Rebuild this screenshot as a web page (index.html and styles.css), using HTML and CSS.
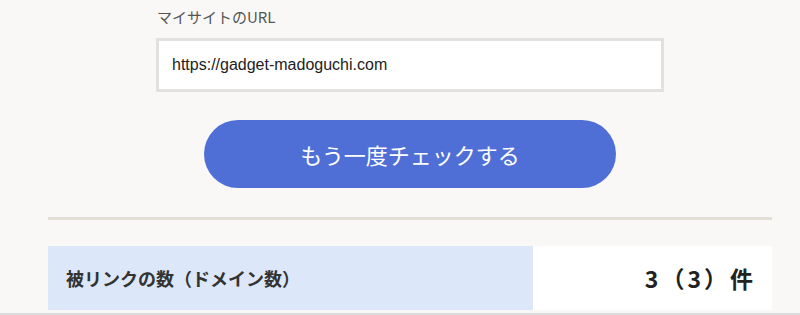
FILE: index.html
```html
<!DOCTYPE html>
<html lang="ja">
<head>
    <meta charset="UTF-8">
    <meta name="viewport" content="width=device-width, initial-scale=1.0">
    <title>被リンクチェック</title>
    <link rel="stylesheet" href="styles.css">
</head>
<body>
    <div class="container">
        <div class="check-form">
            <label class="form-label" for="site-url">マイサイトのURL</label>
            <div class="url-box" id="site-url">https://gadget-madoguchi.com</div>
            <button class="check-btn">もう一度チェックする</button>
        </div>
        <hr class="divider">
        <div class="result-row">
            <div class="result-label">被リンクの数（ドメイン数）</div>
            <div class="result-value">3（3）件</div>
        </div>
    </div>
</body>
</html>
```
FILE: styles.css
```css
html, body {
    margin: 0;
    height: 100%;
}
body {
    font-family: "Noto Sans CJK JP", "Liberation Sans", sans-serif;
    background: #f9f8f6;
    border-bottom: 2px solid #dcdcdc;
    box-sizing: border-box;
    overflow: hidden;
}
.container {
    width: 724px;
    margin-left: 48px;
}
.check-form {
    width: 508px;
    margin: 0 auto;
    padding-top: 6px;
}
.form-label {
    display: block;
    font-size: 15px;
    line-height: 22px;
    color: #555;
    padding-left: 1px;
}
.url-box {
    margin-top: 10px;
    height: 48px;
    border: 3px solid #e3e1de;
    background: #fff;
    box-sizing: content-box;
    display: flex;
    align-items: center;
    padding-left: 13px;
    font-family: "Liberation Sans", Arial, sans-serif;
    font-size: 16px;
    color: #222;
}
.check-btn {
    display: block;
    width: 412px;
    height: 68px;
    margin: 28px auto 0;
    border: none;
    border-radius: 34px;
    background: #4f6fd7;
    color: #fff;
    font-family: "Noto Sans CJK JP", sans-serif;
    font-size: 22px;
    cursor: pointer;
}
.divider {
    margin: 29px 0 0;
    border: none;
    height: 3px;
    background: #e2dfd6;
}
.result-row {
    margin-top: 26px;
    display: flex;
    height: 64px;
}
.result-label {
    width: 485px;
    background: #dce8fa;
    display: flex;
    align-items: center;
    padding-left: 18px;
    box-sizing: border-box;
    font-size: 18px;
    font-weight: bold;
    color: #333;
}
.result-value {
    flex: 1;
    background: #fff;
    display: flex;
    align-items: center;
    justify-content: flex-end;
    padding-right: 16px;
    font-size: 23px;
    letter-spacing: 3px;
    font-weight: bold;
    color: #222;
}
```
